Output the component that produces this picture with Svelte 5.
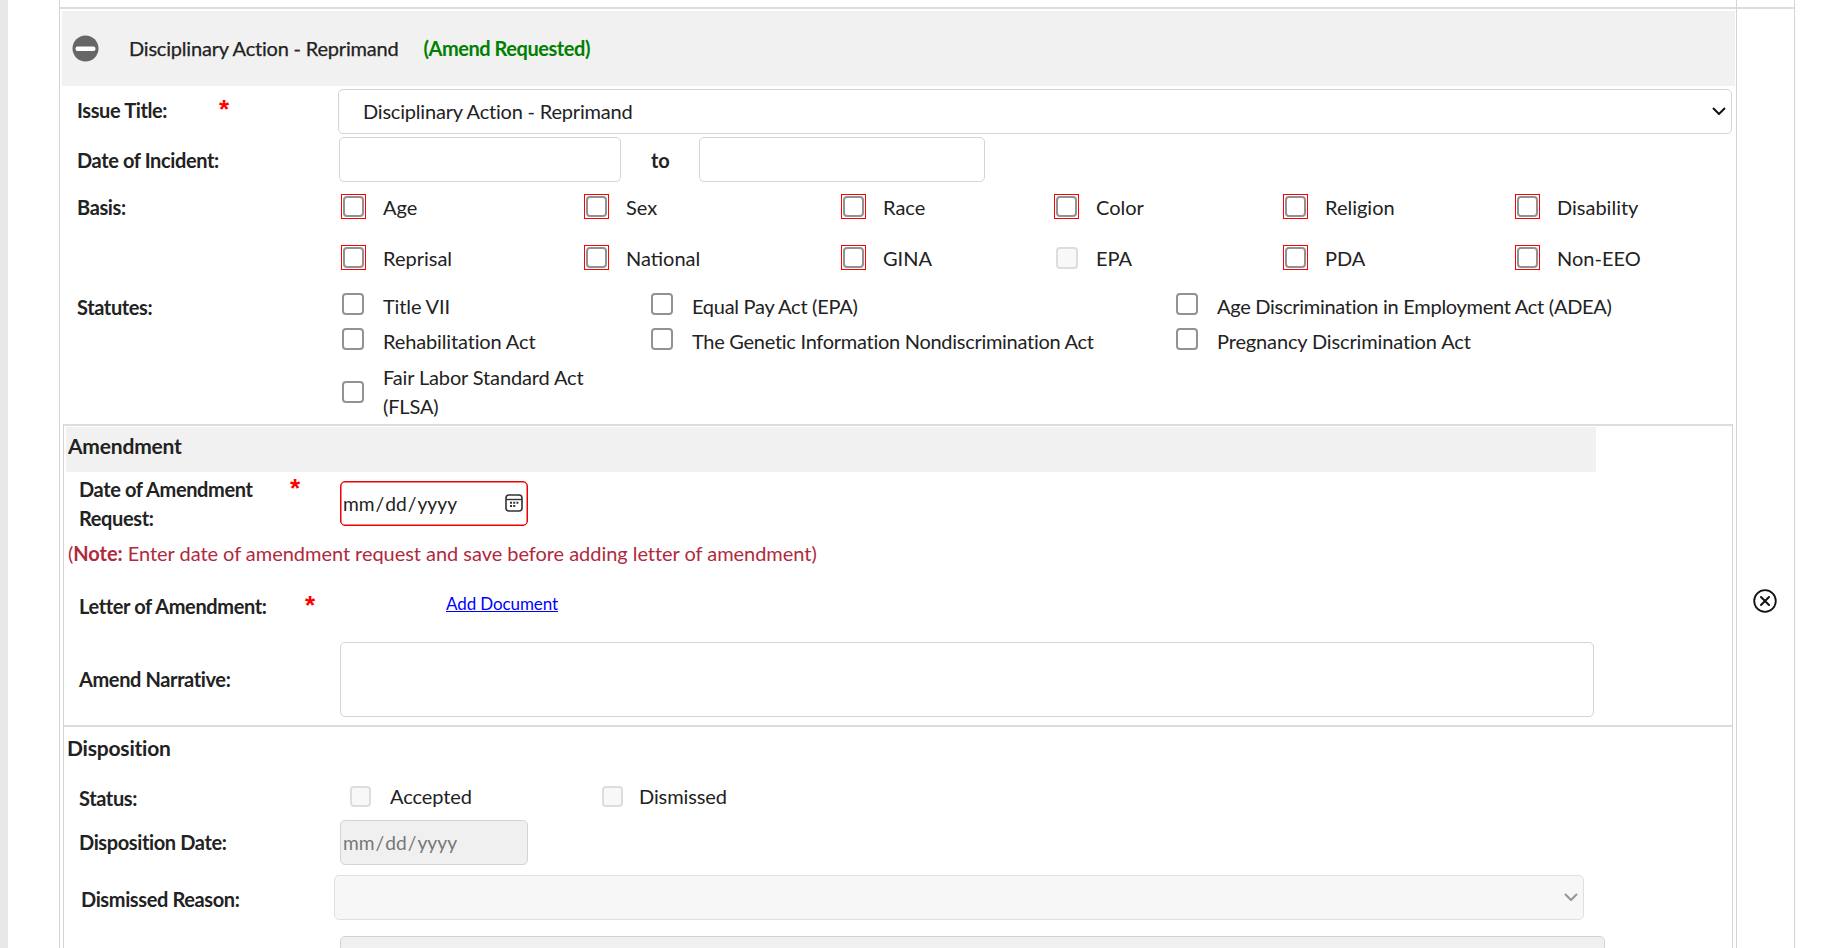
<script lang="ts">
  const basisRows = [
    [['Age', true], ['Sex', true], ['Race', true], ['Color', true], ['Religion', true], ['Disability', true]],
    [['Reprisal', true], ['National', true], ['GINA', true], ['EPA', false], ['PDA', true], ['Non-EEO', true]]
  ] as [string, boolean][][]

  const statutes = [
    'Title VII',
    'Equal Pay Act (EPA)',
    'Age Discrimination in Employment Act (ADEA)',
    'Rehabilitation Act',
    'The Genetic Information Nondiscrimination Act',
    'Pregnancy Discrimination Act'
  ]
</script>

<div class="page">
  <div class="gutter"><div class="strip"></div></div>

  <main class="main">
    <div class="rule"></div>

    <header class="issue-head">
      <svg class="collapse" viewBox="0 0 27 27" aria-hidden="true">
        <circle cx="13.5" cy="13.5" r="13" fill="#666" />
        <rect x="3.5" y="11.5" width="20" height="4.5" rx="2" fill="#fff" />
      </svg>
      <span class="issue-name">Disciplinary Action - Reprimand</span>
      <span class="issue-status">(Amend Requested)</span>
    </header>

    <div class="row row-issue">
      <div class="lbl">Issue Title:<span class="req req-issue">*</span></div>
      <div class="select-wrap">
        <select class="select">
          <option>Disciplinary Action - Reprimand</option>
        </select>
        <svg class="chevron" viewBox="0 0 14 8" aria-hidden="true">
          <path d="M1 1l6 6 6-6" fill="none" stroke="#111" stroke-width="2" />
        </svg>
      </div>
    </div>

    <div class="row row-incident">
      <div class="lbl">Date of Incident:</div>
      <div class="incident">
        <input class="text text-from" type="text" />
        <span class="to">to</span>
        <input class="text text-until" type="text" />
      </div>
    </div>

    <div class="row row-basis">
      <div class="lbl">Basis:</div>
      <div class="basis">
        {#each basisRows as checks}
          {#each checks as [name, flagged]}
            <label class="check">
              <span class="box-wrap" class:flagged>
                <input type="checkbox" disabled={!flagged} />
              </span>
              <span>{name}</span>
            </label>
          {/each}
        {/each}
      </div>
    </div>

    <div class="row row-statutes">
      <div class="lbl">Statutes:</div>
      <div class="statutes">
        {#each statutes as name}
          <label class="check">
            <span class="box-wrap"><input type="checkbox" /></span>
            <span class="statute-name">{name}</span>
          </label>
        {/each}
        <label class="check check-wrap">
          <span class="box-wrap"><input type="checkbox" /></span>
          <span>Fair Labor Standard Act<br />(FLSA)</span>
        </label>
      </div>
    </div>

    <section class="panel">
      <h3 class="panel-title shaded">Amendment</h3>

      <div class="row row-amend-date">
        <div class="lbl">Date of Amendment<br />Request:<span class="req req-amend">*</span></div>
        <div class="date-wrap">
          <input class="date date-required" type="date" />
          <svg class="calendar" viewBox="0 0 18 18" aria-hidden="true">
            <rect x="1" y="1" width="16" height="16" rx="3" fill="none" stroke="#333" stroke-width="1.6" />
            <path d="M1 5.5h16" stroke="#333" stroke-width="1.4" />
            <path d="M5 8.7h2M8.2 8.7h2M11.4 8.7h2M5 12h2M8.2 12h2" stroke="#333" stroke-width="2" />
          </svg>
        </div>
      </div>

      <p class="note">(<strong>Note:</strong> Enter date of amendment request and save before adding letter of amendment)</p>

      <div class="row row-letter">
        <div class="lbl">Letter of Amendment:<span class="req req-letter">*</span></div>
        <a class="doc-link" href="#top">Add Document</a>
      </div>

      <div class="row row-narrative">
        <div class="lbl">Amend Narrative:</div>
        <textarea class="narrative"></textarea>
      </div>

      <div class="divider"></div>

      <h3 class="panel-title dispo-title">Disposition</h3>

      <div class="row row-status">
        <div class="lbl">Status:</div>
        <div class="status">
          <label class="check check-accepted">
            <span class="box-wrap"><input type="checkbox" disabled /></span>
            <span>Accepted</span>
          </label>
          <label class="check check-dismissed">
            <span class="box-wrap"><input type="checkbox" disabled /></span>
            <span>Dismissed</span>
          </label>
        </div>
      </div>

      <div class="row row-dispo-date">
        <div class="lbl">Disposition Date:</div>
        <input class="date" type="date" disabled />
      </div>

      <div class="row row-reason">
        <div class="lbl lbl-reason">Dismissed Reason:</div>
        <div class="select-wrap reason-wrap">
          <select class="select select-reason" disabled></select>
          <svg class="chevron chevron-muted" viewBox="0 0 14 8" aria-hidden="true">
            <path d="M1 1l6 6 6-6" fill="none" stroke="#999" stroke-width="2.2" />
          </svg>
        </div>
      </div>

      <div class="row row-comment">
        <div></div>
        <div class="comment"></div>
      </div>
    </section>
  </main>

  <aside class="side">
    <div class="rule"></div>
    <svg class="close" viewBox="0 0 24 24" aria-hidden="true">
      <circle cx="12" cy="12" r="10.8" fill="none" stroke="#111" stroke-width="1.8" />
      <path d="M8 8l8 8M16 8l-8 8" fill="none" stroke="#111" stroke-width="2" stroke-linecap="round" />
    </svg>
  </aside>
</div>

<style>
  :global(body) {
    margin: 0;
    background: #fff;
    color: #222;
    font-family: Lato, "Liberation Sans", sans-serif;
    font-size: 20px;
  }

  .page {
    display: flex;
    height: 948px;
    overflow: hidden;
  }

  .gutter {
    width: 59px;
    flex-shrink: 0;
  }
  .strip {
    width: 8px;
    height: 100%;
    background: #e8e8e8;
  }

  .main {
    width: 1676px;
    flex-shrink: 0;
    border-left: 1px solid #d4d4d4;
    border-right: 1px solid #d4d4d4;
  }
  .side {
    width: 57px;
    flex-shrink: 0;
    border-right: 1px solid #d4d4d4;
  }
  .rule {
    height: 2px;
    margin-top: 7px;
    background: #ddd;
  }
  .close {
    display: block;
    width: 24px;
    height: 24px;
    margin: 580px 0 0 16px;
  }

  .issue-head {
    display: flex;
    align-items: center;
    height: 75px;
    margin: 2px 1px 0 2px;
    padding-left: 10px;
    background: #f1f1f1;
    letter-spacing: -0.2px;
  }
  .issue-name {
    margin-bottom: 2px;
    -webkit-text-stroke: 0.25px #222;
  }
  .collapse {
    width: 27px;
    height: 27px;
    margin-right: 30px;
  }
  .issue-status {
    margin: 0 0 2px 25px;
    color: #008000;
    font-weight: 700;
    letter-spacing: -0.45px;
  }

  .row {
    display: grid;
    grid-template-columns: 278px 1fr;
  }
  .lbl {
    position: relative;
    padding-left: 17px;
    font-weight: 700;
    letter-spacing: -0.38px;
    line-height: 29px;
  }
  .req {
    position: absolute;
    color: #f00;
    font-family: "Liberation Sans", sans-serif;
    font-weight: 700;
    font-size: 26px;
    line-height: 26px;
    letter-spacing: 0;
  }
  .req-issue { left: 159px; top: 7px; }
  .req-amend { left: 226px; top: 0; }
  .req-letter { left: 241px; top: 16px; }

  .select-wrap {
    position: relative;
    width: 1394px;
    height: 45px;
  }
  .select {
    display: block;
    appearance: none;
    box-sizing: border-box;
    width: 100%;
    height: 45px;
    padding: 0 0 2px 24px;
    border: 1px solid #d4d4d4;
    border-radius: 5px;
    background: #fff;
    color: #222;
    font: inherit;
    letter-spacing: -0.2px;
  }
  .chevron {
    position: absolute;
    top: 18px;
    right: 6px;
    width: 14px;
    height: 8px;
  }
  .row-issue { margin-top: 3px; height: 45px; }
  .row-issue .lbl { padding-top: 7px; }

  .row-incident { margin-top: 3px; height: 45px; }
  .row-incident .lbl { padding-top: 9px; }
  .incident {
    display: flex;
    align-items: center;
  }
  .text {
    box-sizing: border-box;
    height: 45px;
    border: 1px solid #d4d4d4;
    border-radius: 5px;
    background: #fff;
  }
  .text-from { width: 282px; margin-left: 1px; }
  .text-until { width: 286px; }
  .to {
    box-sizing: border-box;
    width: 78px;
    padding-left: 30px;
    font-weight: 700;
  }

  .box-wrap {
    display: inline-flex;
    align-items: center;
    justify-content: center;
    box-sizing: border-box;
    flex-shrink: 0;
    width: 25px;
    height: 25px;
    margin-right: 17px;
  }
  .box-wrap.flagged {
    border: 1px solid #f00;
  }
  .box-wrap input {
    appearance: none;
    box-sizing: border-box;
    width: 22px;
    height: 22px;
    margin: 0;
    background: #fff;
    border: 2px solid #929292;
    border-radius: 4px;
  }
  .box-wrap.flagged input {
    width: 21px;
    height: 21px;
  }
  .box-wrap input:disabled {
    background: #f8f8f8;
    border-color: #ddd;
  }
  .check {
    display: flex;
    align-items: center;
  }

  .row-basis { margin-top: 12px; }
  .row-basis .lbl { line-height: 27px; }
  .basis {
    display: grid;
    grid-template-columns: 243px 257px 213px 229px 232px 1fr;
    grid-auto-rows: 25px;
    row-gap: 26px;
    padding-left: 3px;
  }

  .row-statutes { margin-top: 21px; }
  .row-statutes .lbl { padding-top: 2px; }
  .statutes {
    display: grid;
    grid-template-columns: 309px 525px 1fr;
    grid-auto-rows: 25px;
    row-gap: 10px;
    padding-left: 2px;
    letter-spacing: -0.14px;
  }
  .statutes .box-wrap {
    margin-right: 18px;
  }
  .statutes .check:nth-child(2),
  .statutes .check:nth-child(3),
  .statutes .check:nth-child(5) {
    letter-spacing: -0.28px;
  }
  .statute-name {
    padding-top: 4px;
  }
  .check-wrap {
    grid-column: 1;
    grid-row: 3 / span 2;
    align-self: start;
    height: 58px;
    margin-top: 2px;
    line-height: 29px;
  }

  .panel {
    box-sizing: border-box;
    height: 540px;
    margin: 3px 3px 0 3px;
    border-top: 2px solid #ddd;
    border-left: 1px solid #d4d4d4;
    border-right: 1px solid #d4d4d4;
  }
  .panel-title {
    display: flex;
    align-items: center;
    box-sizing: border-box;
    height: 45px;
    margin: 0;
    padding-left: 3px;
    font-size: 21px;
    font-weight: 700;
    letter-spacing: -0.2px;
  }
  .panel-title.shaded {
    width: 1530px;
    margin: 1px 0 0 2px;
    padding: 0 0 9px 2px;
    background: #f1f1f1;
  }
  .dispo-title {
    height: 42px;
    padding-bottom: 2px;
  }

  .panel .row {
    grid-template-columns: 276px 1fr;
  }
  .panel .lbl {
    padding-left: 15px;
  }

  .date-wrap {
    position: relative;
    width: 188px;
    height: 45px;
    margin-top: 6px;
  }
  .date {
    box-sizing: border-box;
    width: 188px;
    height: 45px;
    padding: 0 1px;
    border: 1px solid #d4d4d4;
    border-radius: 5px;
    background: #f0f0f0;
    color: #777;
    font: inherit;
    font-size: 19.2px;
  }
  .date-required {
    border: 1px solid #e00;
    box-shadow: inset 0 0 0 0.5px #e00;
    background: #fff;
    color: #222;
  }
  .date-required::-webkit-calendar-picker-indicator {
    opacity: 0;
  }
  .calendar {
    position: absolute;
    top: 13px;
    right: 5px;
    width: 18px;
    height: 18px;
    pointer-events: none;
  }

  .row-amend-date { margin-top: 3px; }

  .note {
    margin: 6px 0 0 4px;
    color: #b02a3e;
    line-height: 29px;
    letter-spacing: -0.04px;
  }

  .row-letter { margin-top: 8px; height: 66px; }
  .row-letter .lbl { padding-top: 16px; }
  .doc-link {
    height: 24px;
    margin: 16px 0 0 106px;
    justify-self: start;
    color: #00f;
    font-size: 17px;
    letter-spacing: -0.1px;
    line-height: 24px;
  }

  .row-narrative { height: 75px; }
  .row-narrative .lbl { padding-top: 23px; }
  .narrative {
    box-sizing: border-box;
    width: 1254px;
    height: 75px;
    border: 1px solid #d4d4d4;
    border-radius: 5px;
    resize: none;
  }

  .divider {
    height: 2px;
    margin-top: 8px;
    background: #ddd;
  }

  .row-status { margin-top: 15px; }
  .status {
    display: flex;
    align-items: flex-start;
    letter-spacing: -0.1px;
  }
  .status .check span:last-child {
    margin-top: -2px;
  }
  .check-accepted {
    width: 252px;
    margin-left: 8px;
  }
  .status input {
    width: 21px;
    height: 21px;
  }
  .check-dismissed .box-wrap {
    margin-right: 14px;
  }
  .row-dispo-date { margin-top: 7px; }
  .row-dispo-date .lbl { padding-top: 8px; }

  .row-reason { margin-top: 10px; }
  .row-reason .lbl { padding-top: 10px; }
  .panel .lbl-reason { padding-left: 17px; }
  .reason-wrap {
    width: 1250px;
    margin-left: -6px;
  }
  .select-reason {
    background: #f4f4f4;
  }

  .row-comment { margin-top: 16px; }
  .comment {
    width: 1263px;
    height: 60px;
    border: 1px solid #d4d4d4;
    border-radius: 5px;
    background: #f0f0f0;
  }
</style>
